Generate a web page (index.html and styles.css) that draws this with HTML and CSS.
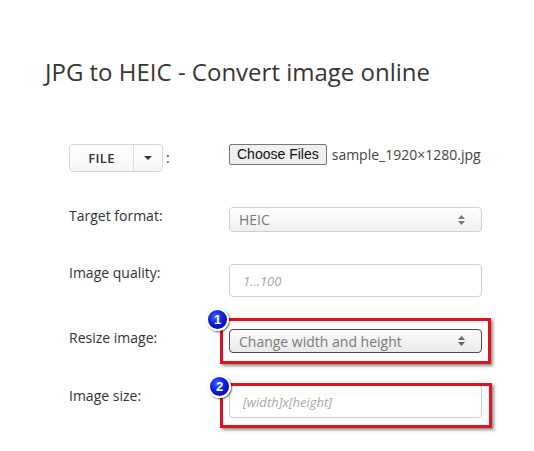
FILE: index.html
```html
<!DOCTYPE html>
<html lang="en">
<head>
<meta charset="utf-8">
<title>JPG to HEIC - Convert image online</title>
<link rel="stylesheet" href="styles.css">
</head>
<body>
<main class="page">
  <h1 class="title">JPG to HEIC - Convert image online</h1>
  <form class="form">
    <div class="row row-file">
      <div class="label label-file">
        <div class="split">
          <span class="split-main">FILE</span>
          <span class="split-caret"><svg width="8" height="4" viewBox="0 0 8 4"><path d="M0 0H8L4 4Z" fill="#333"/></svg></span>
        </div>
        <span class="colon">:</span>
      </div>
      <div class="control-file">
        <button type="button" class="choose">Choose Files</button>
        <span class="filename">sample_1920×1280.jpg</span>
      </div>
    </div>

    <div class="row">
      <div class="label">Target format:</div>
      <div class="select">
        <span>HEIC</span>
        <svg class="arrows" width="7" height="10" viewBox="0 0 7 10"><path d="M0 4L3.5 0L7 4Z M0 6H7L3.5 10Z" fill="#777"/></svg>
      </div>
    </div>

    <div class="row">
      <div class="label">Image quality:</div>
      <input class="input" type="text" placeholder="1...100">
    </div>

    <div class="row">
      <div class="label">Resize image:</div>
      <div class="field">
        <div class="select select-active">
          <span>Change width and height</span>
          <svg class="arrows" width="7" height="10" viewBox="0 0 7 10"><path d="M0 4L3.5 0L7 4Z M0 6H7L3.5 10Z" fill="#666"/></svg>
        </div>
        <div class="mark mark-1"><span class="badge badge-1">1</span></div>
      </div>
    </div>

    <div class="row row-last">
      <div class="label label-low">Image size:</div>
      <div class="field">
        <input class="input" type="text" placeholder="[width]x[height]">
        <div class="mark mark-2"><span class="badge badge-2">2</span></div>
      </div>
    </div>
  </form>
</main>
</body>
</html>
```

FILE: styles.css
```css
html,
body {
  min-height: 100%;
}

body {
  margin: 0;
  background: #fff;
  color: #333;
  font-family: "Open Sans", "DejaVu Sans", sans-serif;
}

.page {
  padding: 55px 0 30px 45px;
}

.title {
  margin: 0;
  font-size: 24px;
  font-weight: 400;
  line-height: 33px;
  color: #363636;
}

.form {
  display: flex;
  flex-direction: column;
  gap: 32px;
  margin: 56px 0 0 24px;
}

.row {
  display: grid;
  grid-template-columns: 160px 253px;
  align-items: start;
}

.row-file {
  margin-bottom: 3px;
}

.label {
  margin-top: -1px;
  font-size: 14px;
  line-height: 20px;
  color: #333;
}

.label-low {
  margin-top: 1px;
}

.label-file {
  display: flex;
  align-items: center;
  margin-top: 0;
}

.split {
  display: flex;
  box-sizing: border-box;
  height: 28px;
  border: 1px solid #d6d6d6;
  border-radius: 4px;
  background: linear-gradient(#ffffff, #f5f6f7);
}

.split-main {
  width: 63px;
  display: flex;
  align-items: center;
  justify-content: center;
  font-size: 13px;
  font-weight: 600;
  letter-spacing: 0.3px;
  color: #333;
  border-right: 1px solid #dcdcdc;
}

.split-caret {
  width: 28px;
  display: flex;
  align-items: center;
  justify-content: center;
}

.colon {
  margin-left: 3px;
  font-size: 14px;
  color: #333;
}

.control-file {
  display: flex;
  align-items: center;
  gap: 5px;
}

.choose {
  box-sizing: border-box;
  height: 21px;
  padding: 0 7px;
  border: 1px solid #767676;
  border-radius: 2px;
  background: #efefef;
  color: #111;
  font-family: "Liberation Sans", Arial, sans-serif;
  font-size: 14px;
  line-height: 19px;
}

.filename {
  font-size: 14px;
  color: #444;
}

.select {
  box-sizing: border-box;
  height: 25px;
  display: flex;
  align-items: center;
  justify-content: space-between;
  padding: 0 16px 0 9px;
  border: 1px solid #cfcfcf;
  border-radius: 4px;
  background: linear-gradient(#ffffff, #eef0f1);
  font-size: 14px;
  color: #7a7a7a;
}

.select-active {
  height: 24px;
  border-color: #4a4a4a;
  background: linear-gradient(#fbfbfb, #e9eaeb);
}

.input {
  display: block;
  box-sizing: border-box;
  width: 100%;
  height: 33px;
  margin: 0;
  padding: 0 13px;
  border: 1px solid #cfcfcf;
  border-radius: 4px;
  background: #fff;
  font-family: "Open Sans", sans-serif;
  font-size: 13px;
  font-style: italic;
  color: #333;
  outline: none;
}

.input::placeholder {
  color: #a8a8a8;
  font-style: italic;
}

.field {
  position: relative;
}

.mark {
  position: absolute;
  border: 3px solid #e3121a;
  box-shadow: 2px 2px 3px rgba(0, 0, 0, 0.45);
  pointer-events: none;
}

.mark-1 {
  top: -11px;
  bottom: -11px;
  left: -9px;
  right: -9px;
}

.mark-2 {
  top: -2px;
  bottom: -10px;
  left: -9px;
  right: -10px;
}

.badge {
  position: absolute;
  box-sizing: border-box;
  width: 23px;
  height: 23px;
  border-radius: 50%;
  border: 2px solid #fff;
  background: radial-gradient(circle at 40% 35%, #4563ff 0%, #0b1fd6 45%, #00008c 100%);
  box-shadow: 1px 1px 2px rgba(0, 0, 0, 0.6);
  color: #fff;
  font-family: "Liberation Sans", Arial, sans-serif;
  font-size: 13px;
  font-weight: 700;
  display: flex;
  align-items: center;
  justify-content: center;
}

.badge-1 {
  left: -17px;
  top: -13px;
}

.badge-2 {
  left: -15px;
  top: -11px;
}
```
